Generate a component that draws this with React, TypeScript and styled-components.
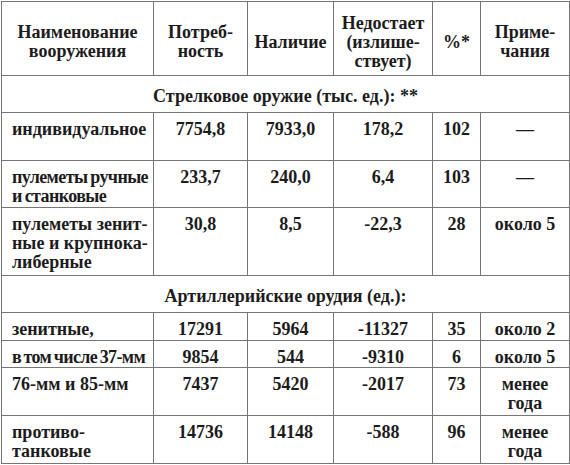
import styled, { createGlobalStyle } from 'styled-components';

const GlobalStyle = createGlobalStyle`
  html, body {
    margin: 0;
    padding: 0;
    background: #ffffff;
  }
  body {
    font-family: 'Liberation Serif', 'Times New Roman', serif;
    color: #1c1c1c;
  }
`;

const Page = styled.div`
  padding: 1px 0 0 1px;
`;

const Table = styled.table`
  border-collapse: collapse;
  table-layout: fixed;
  width: 568px;
  font-size: 18px;
  font-weight: 700;
  line-height: 19px;
`;

const Row = styled.tr<{ $h: number }>`
  height: ${(p) => p.$h}px;
`;

const HeadCell = styled.th`
  border: 1px solid #767676;
  padding: 7px 2px 0;
  font-weight: 700;
  text-align: center;
  vertical-align: middle;
  white-space: nowrap;
`;

const SectionCell = styled.td`
  border: 1px solid #767676;
  padding: 4px 0 0;
  text-align: center;
  vertical-align: middle;
  white-space: nowrap;
`;

const NameCell = styled.td<{ $ls?: number; $ws?: number }>`
  border: 1px solid #767676;
  padding: 7px 2px 0 10px;
  text-align: left;
  vertical-align: top;
  white-space: nowrap;
  letter-spacing: ${(p) => p.$ls ?? 0}px;
  word-spacing: ${(p) => p.$ws ?? 0}px;
`;

const Cell = styled.td`
  border: 1px solid #767676;
  padding: 7px 2px 0;
  text-align: center;
  vertical-align: top;
  white-space: nowrap;
`;

type Item = {
  name: React.ReactNode;
  need: string;
  have: string;
  diff: string;
  pct: string;
  note: React.ReactNode;
  h: number;
  ls?: number;
  ws?: number;
};

const lessThanYear = (
  <>
    менее
    <br />
    года
  </>
);

const smallArms: Item[] = [
  { name: 'индивидуальное', need: '7754,8', have: '7933,0', diff: '178,2', pct: '102', note: '—', h: 48 },
  {
    name: (
      <>
        пулеметы ручные
        <br />и станковые
      </>
    ),
    need: '233,7',
    have: '240,0',
    diff: '6,4',
    pct: '103',
    note: '—',
    h: 47,
    ls: -0.6,
    ws: -1,
  },
  {
    name: (
      <>
        пулеметы зенит-
        <br />
        ные и крупнока-
        <br />
        либерные
      </>
    ),
    need: '30,8',
    have: '8,5',
    diff: '-22,3',
    pct: '28',
    note: 'около 5',
    h: 68,
  },
];

const artillery: Item[] = [
  { name: 'зенитные,', need: '17291', have: '5964', diff: '-11327', pct: '35', note: 'около 2', h: 28 },
  {
    name: 'в том числе 37-мм',
    need: '9854',
    have: '544',
    diff: '-9310',
    pct: '6',
    note: 'около 5',
    h: 27,
    ls: -0.6,
    ws: -1.5,
  },
  { name: '76-мм и 85-мм', need: '7437', have: '5420', diff: '-2017', pct: '73', note: lessThanYear, h: 48 },
  {
    name: (
      <>
        противо-
        <br />
        танковые
      </>
    ),
    need: '14736',
    have: '14148',
    diff: '-588',
    pct: '96',
    note: lessThanYear,
    h: 48,
  },
];

const renderRows = (items: Item[]) =>
  items.map((it, i) => (
    <Row key={i} $h={it.h}>
      <NameCell $ls={it.ls} $ws={it.ws}>
        {it.name}
      </NameCell>
      <Cell>{it.need}</Cell>
      <Cell>{it.have}</Cell>
      <Cell>{it.diff}</Cell>
      <Cell>{it.pct}</Cell>
      <Cell>{it.note}</Cell>
    </Row>
  ));

const App = () => (
  <>
    <GlobalStyle />
    <Page>
      <Table>
        <colgroup>
          <col style={{ width: 152 }} />
          <col style={{ width: 94 }} />
          <col style={{ width: 86 }} />
          <col style={{ width: 99 }} />
          <col style={{ width: 48 }} />
          <col style={{ width: 89 }} />
        </colgroup>
        <thead>
          <Row $h={74}>
            <HeadCell>
              Наименование
              <br />
              вооружения
            </HeadCell>
            <HeadCell>
              Потреб-
              <br />
              ность
            </HeadCell>
            <HeadCell>Наличие</HeadCell>
            <HeadCell>
              Недостает
              <br />
              (излише-
              <br />
              ствует)
            </HeadCell>
            <HeadCell>%*</HeadCell>
            <HeadCell>
              Приме-
              <br />
              чания
            </HeadCell>
          </Row>
        </thead>
        <tbody>
          <Row $h={37}>
            <SectionCell colSpan={6}>Стрелковое оружие (тыс. ед.): **</SectionCell>
          </Row>
          {renderRows(smallArms)}
          <Row $h={37}>
            <SectionCell colSpan={6}>Артиллерийские орудия (ед.):</SectionCell>
          </Row>
          {renderRows(artillery)}
        </tbody>
      </Table>
    </Page>
  </>
);

export default App;
